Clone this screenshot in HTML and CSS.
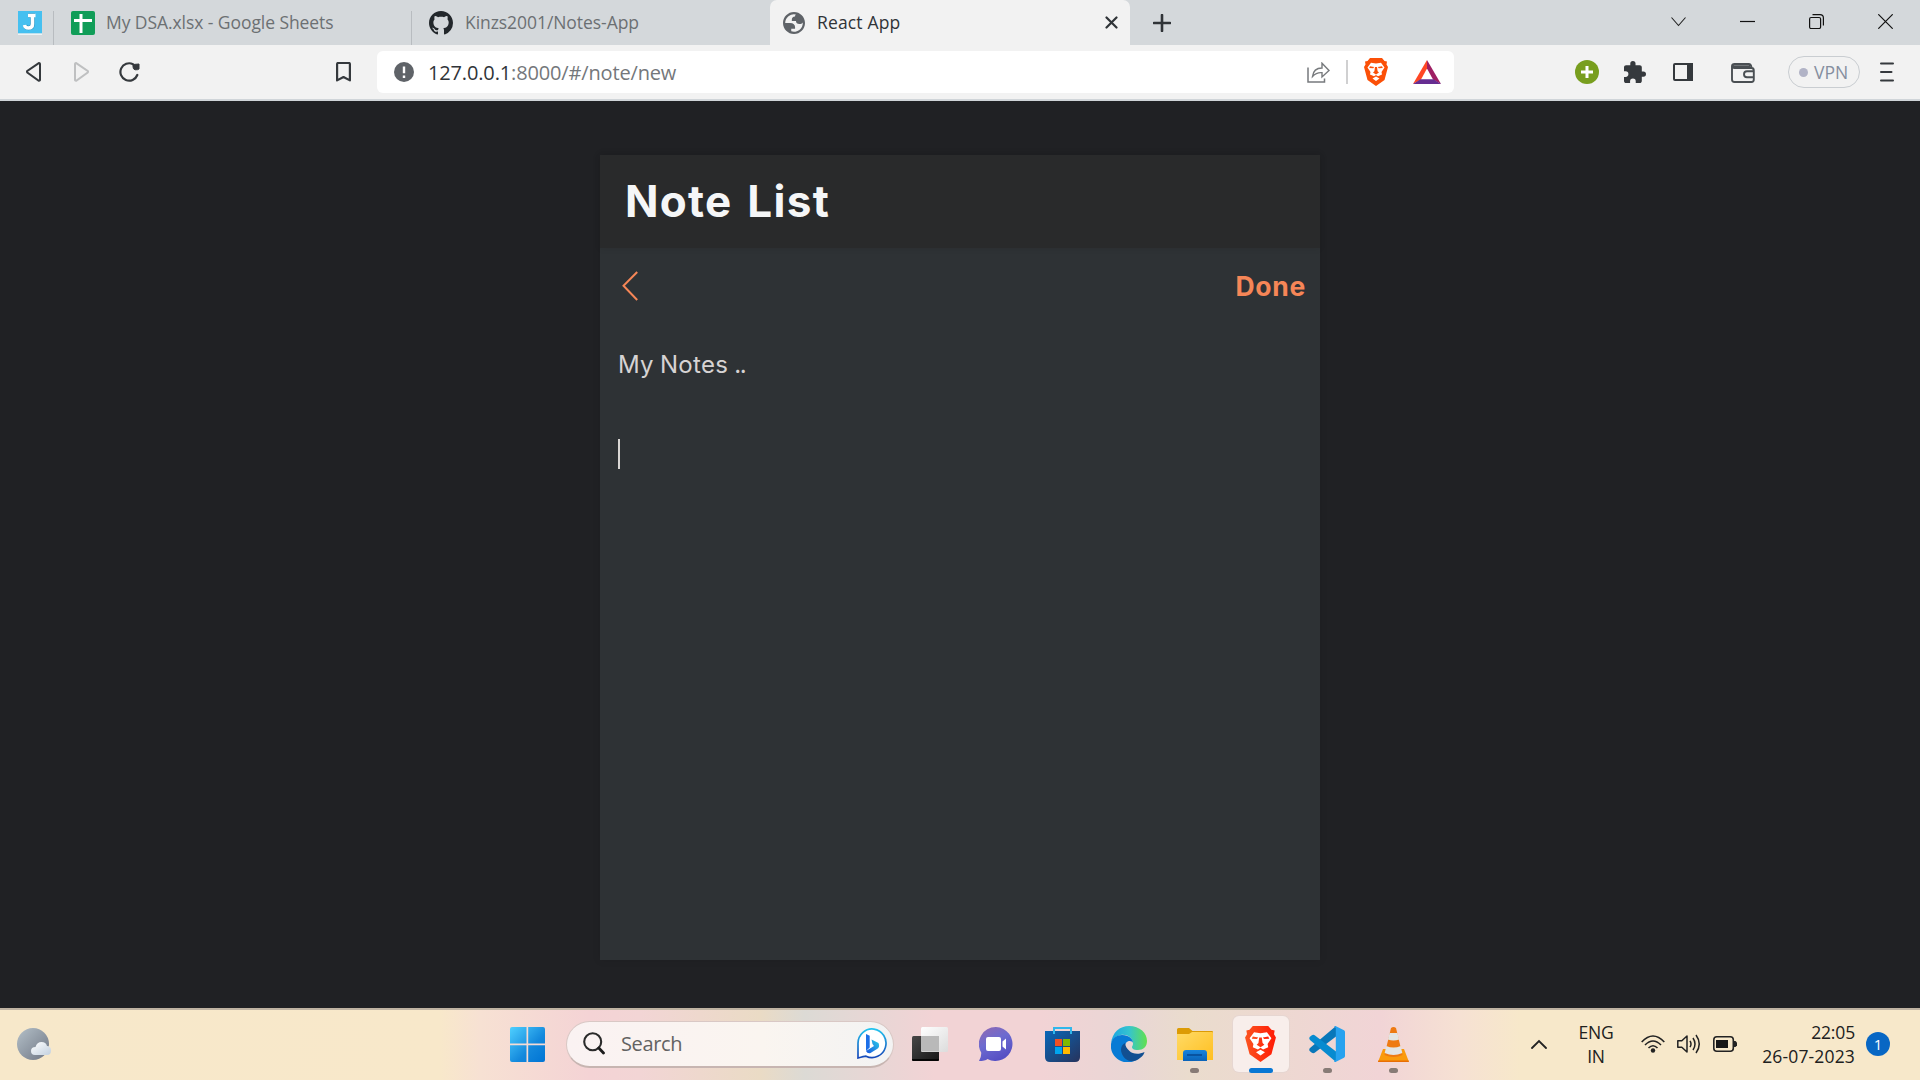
FILE: index.html
```html
<!DOCTYPE html>
<html lang="en">
<head>
<meta charset="utf-8">
<title>React App</title>
<link rel="stylesheet" href="styles.css">
</head>
<body>
<header class="tabs">
  <div class="tab tab-pinned">
    <svg width="24" height="24" viewBox="0 0 24 24"><rect width="24" height="22.500" fill="#46c0f0"/><rect y="22.500" width="24" height="1.500" fill="#eef3f5"/><path d="M10 4.500h7M14.500 4.500v8.500q0 4-4 4-3 0-3.500-3" fill="none" stroke="#2b91bd" stroke-width="4.500"/><path d="M10 4.500h7.500M14.500 4.500v8.500q0 4-4 4-3.500 0-4-3" fill="none" stroke="#fff" stroke-width="3.500"/></svg>
  </div>
  <div class="tab tab-sheets">
    <svg width="24" height="24" viewBox="0 0 24 24"><rect width="24" height="24" rx="2" fill="#109d58"/><path d="M10 3v19M3 9.500h18" stroke="#fff" stroke-width="3"/></svg>
    <span class="tab-title title-sheets">My DSA.xlsx - Google Sheets</span>
  </div>
  <div class="tab tab-github">
    <svg width="24" height="24" viewBox="0 0 16 16"><path fill="#22272b" d="M8 0C3.580 0 0 3.580 0 8c0 3.540 2.290 6.530 5.470 7.590.4.070.55-.17.55-.38 0-.19-.01-.82-.01-1.490-2.010.37-2.530-.49-2.690-.94-.09-.23-.48-.94-.82-1.130-.28-.15-.68-.52-.01-.53.63-.01 1.080.58 1.230.82.720 1.210 1.870.87 2.330.66.070-.52.280-.87.510-1.070-1.780-.2-3.640-.89-3.640-3.950 0-.87.310-1.590.82-2.150-.08-.2-.36-1.020.08-2.120 0 0 .67-.21 2.200.82.640-.18 1.320-.27 2-.27s1.360.09 2 .27c1.530-1.040 2.200-.82 2.200-.82.440 1.100.160 1.920.080 2.120.510.560.820 1.270.820 2.150 0 3.070-1.870 3.750-3.650 3.950.290.250.540.730.540 1.480 0 1.070-.01 1.930-.01 2.200 0 .21.150.46.550.38A8.010 8.010 0 0016 8c0-4.420-3.580-8-8-8z"/></svg>
    <span class="tab-title title-github">Kinzs2001/Notes-App</span>
  </div>
  <div class="tab tab-active">
    <svg width="22" height="22" viewBox="2 2 20 20"><path fill="#5f6368" fill-rule="evenodd" d="M12 2C6.480 2 2 6.480 2 12s4.480 10 10 10 10-4.480 10-10S17.520 2 12 2zM4 12h4.400c3.407.022 4.922 1.730 4.543 5.127H9.488v2.470a8.004 8.004 0 0 0 10.498-8.083C19.327 12.504 18.332 13 17 13c-2.137 0-3.206-.916-3.206-2.750h-3.748c-.274-2.728.683-4.092 2.870-4.092 0-.975.327-1.597.811-1.970A8.004 8.004 0 0 0 4 12z"/></svg>
    <span class="tab-title title-active">React App</span>
    <svg class="tab-close" width="13" height="13" viewBox="0 0 13 13"><path d="M1.500 1.500l10 10M11.500 1.500l-10 10" stroke="#303438" stroke-width="2.200" stroke-linecap="round"/></svg>
  </div>
  <svg class="new-tab" width="18" height="18" viewBox="0 0 18 18"><path d="M9 1v16M1 9h16" stroke="#303438" stroke-width="2.600" stroke-linecap="round"/></svg>
  <div class="window-buttons">
    <svg width="15" height="15" viewBox="0 0 15 15"><path d="M.5 3.500l7 8 7-8" fill="none" stroke="#222" stroke-width="1.100"/></svg>
    <svg width="15" height="15" viewBox="0 0 15 15"><path d="M0 7.500h15" stroke="#111" stroke-width="1.200"/></svg>
    <svg width="15" height="15" viewBox="0 0 15 15"><rect x=".6" y="3.500" width="11" height="11" rx="1.500" fill="none" stroke="#111" stroke-width="1.200"/><path d="M3.500.6h7.500q3.400 0 3.400 3.400v7.500" fill="none" stroke="#111" stroke-width="1.200"/></svg>
    <svg width="15" height="15" viewBox="0 0 15 15"><path d="M.3.300l14.400 14.400M14.700.300L.3 14.700" stroke="#111" stroke-width="1.200"/></svg>
  </div>
</header>

<nav class="toolbar">
  <svg class="nav-back" width="15" height="20" viewBox="0 0 15 20"><path d="M12.800 1.100L1.300 8.900q-.6.900 0 1.600l11.500 8.200q1.200.2 1.200-1V2.200q0-1.300-1.200-1.100z" fill="none" stroke="#35393d" stroke-width="2"/></svg>
  <svg class="nav-forward" width="15" height="20" viewBox="0 0 15 20"><path d="M2.200 1.100l11.500 7.800q.6.900 0 1.600L2.200 18.700q-1.200.2-1.200-1V2.200q0-1.300 1.200-1.100z" fill="none" stroke="#bfc0c1" stroke-width="2"/></svg>
  <svg class="nav-reload" width="21" height="20" viewBox="0 0 21 20"><path d="M14 2.200A8.700 8.700 0 1 0 18.300 13" fill="none" stroke="#35393d" stroke-width="2.200" stroke-linecap="round"/><path d="M14 2.500l6-.5v5q-1 1-4 .8-2-.6-2-3z" fill="#35393d" stroke="#35393d"/></svg>
  <svg class="nav-bookmark" width="15" height="20" viewBox="0 0 15 20"><path d="M1.100 2q0-1 1-1h10.800q1 0 1 1v16.400L7.500 15l-6.400 3.400z" fill="none" stroke="#35393d" stroke-width="2.200" stroke-linejoin="round"/></svg>
  <div class="address">
    <svg width="20" height="20" viewBox="0 0 20 20"><circle cx="10" cy="10" r="10" fill="#5f6368"/><path d="M10 4.500v6.800M10 13.500v2.600" stroke="#fff" stroke-width="2.400"/></svg>
    <span class="url"><b>127.0.0.1</b>:8000/#/note/new</span>
    <svg class="share" width="23" height="21" viewBox="0 0 23 21"><path d="M1 5.500V20h16.500v-3.500" fill="none" stroke="#777a7d" stroke-width="1.500"/><path d="M5.500 14.500q1-8.500 9.500-8.500V1.200l7 7.300-7 6.500v-4.300q-5.500-.5-9.500 3.800z" fill="none" stroke="#777a7d" stroke-width="1.400"/></svg>
    <span class="address-rule"></span>
    <svg class="shield" width="24" height="28" viewBox="0 0 24 28"><use href="#lion" fill="#fb5008"/></svg>
    <svg class="rewards" width="28" height="24" viewBox="0 0 28 24"><path d="M14 0L0 24l8-4.500 6-11z" fill="#ff4724"/><path d="M14 0l14 24-8-4.500-6-11z" fill="#9e1f63"/><path d="M0 24h28l-7.500-4.800H7.500z" fill="#662d91"/></svg>
  </div>
  <svg class="extension" width="24" height="24" viewBox="0 0 24 24"><circle cx="12" cy="12" r="12" fill="#789e1e"/><path d="M12 6v12M6 12h12" stroke="#fff" stroke-width="3"/></svg>
  <svg class="puzzle" width="22" height="22" viewBox="2 1 21 21"><path fill="#35393d" d="M20.500 11H19V7c0-1.100-.9-2-2-2h-4V3.500a2.500 2.500 0 0 0-5 0V5H4c-1.100 0-2 .9-2 2v3.800h1.500a2.700 2.700 0 0 1 0 5.400H2V20c0 1.100.9 2 2 2h3.800v-1.500a2.700 2.700 0 0 1 5.400 0V22H17c1.100 0 2-.9 2-2v-4h1.500a2.500 2.500 0 0 0 0-5z"/></svg>
  <svg class="side-panel" width="20" height="18" viewBox="0 0 20 18"><rect x="1" y="1" width="18" height="16" rx="1" fill="none" stroke="#35393d" stroke-width="2"/><path d="M14 0h6v18h-6z" fill="#35393d"/></svg>
  <svg class="wallet" width="24" height="20" viewBox="0 0 24 20"><path d="M1 3v13.500Q1 19 3.500 19h17q2.300 0 2.300-2.500V7.500Q22.800 5 20.500 5H3.500Q1 5 1 3q0-2 2.500-2h14.200q2.300 0 2.800 3.500M2 3.100h17M23 8.300h-7q-3 0-3 3t3 3h7" fill="none" stroke="#4a4f53" stroke-width="1.900"/></svg>
  <div class="vpn"><i></i><span>VPN</span></div>
  <svg class="menu" width="14" height="20" viewBox="0 0 14 20"><path d="M1 1.500h12M1 10h10.500M1 18.500h12" stroke="#35393d" stroke-width="2" stroke-linecap="round"/></svg>
</nav>

<main class="page">
  <section class="card">
    <div class="card-header"><h1>Note List</h1></div>
    <div class="note">
      <div class="note-actions">
        <svg width="16" height="30" viewBox="0 0 16 30"><path d="M15.200 1L1.500 14.800 15.200 29" fill="none" stroke="#f68657" stroke-width="2"/></svg>
        <span class="done">Done</span>
      </div>
      <div class="note-text">My Notes <span class="dots">..</span></div>
      <div class="caret"></div>
    </div>
  </section>
</main>

<footer class="taskbar">
  <svg class="weather" width="34" height="33" viewBox="0 0 34 33"><circle cx="16" cy="16" r="16" fill="url(#moon)"/><path d="M18 27q-4 0-4-4t4.500-4q1.500-5 6-5t5.500 4q4 0 4 4.500t-4 4.500z" fill="url(#cloud)"/></svg>
  <svg class="start" width="35" height="35" viewBox="0 0 35 35"><path fill="url(#win)" d="M2 0h14.500v16.500H0V2q0-2 2-2zM18.200 0H33q2 0 2 2v14.500H18.200zM0 18.200h16.500V35H2q-2 0-2-2zM18.200 18.200H35V33q0 2-2 2H18.200z"/></svg>
  <div class="search">
    <svg width="22" height="23" viewBox="0 0 22 23"><circle cx="9.700" cy="9.700" r="8.500" fill="none" stroke="#2a2a2a" stroke-width="2.100"/><path d="M15.800 16l4.700 5" stroke="#1c1c1c" stroke-width="2.800" stroke-linecap="round"/></svg>
    <span>Search</span>
    <svg class="bing" width="30" height="31" viewBox="0 0 30 31"><path d="M1 30V15.500a14 14.300 0 1 1 8 12.700Q7 28.500 1 30z" fill="#fff" stroke="url(#bing)" stroke-width="1.700"/><path d="M9 6l3.700 1.700v11.800L9 23z" fill="#1b6fe8"/><path d="M14.500 11.500l7 3.500q1.800 4-1.500 6l-6.500 4q-3 .8-4.500-2l8-5-1.500-2z" fill="url(#bing2)"/></svg>
  </div>
  <div class="apps">
    <div class="app"><svg width="36" height="34" viewBox="0 0 36 34"><rect y="9" width="27" height="25" rx="1.500" fill="url(#dark)"/><path d="M0 32h27v.500q0 1.500-1.500 1.500h-24Q0 34 0 32.500z" fill="#050505"/><rect x="9" width="27" height="25" rx="1.500" fill="url(#pale)"/><path d="M9 9h18v15.500H10.500Q9 24.500 9 23z" fill="#b9b9b9"/></svg></div>
    <div class="app"><svg width="34" height="34" viewBox="0 0 34 34"><path d="M17 0a17 17 0 1 1-8.500 32Q6 34 0 34q2.500-4 2.200-8.500A17 17 0 0 1 17 0z" fill="url(#chat)"/><rect x="7" y="10" width="15" height="14" rx="2" fill="#fff"/><path d="M23.500 14.500l3.500-3v11l-3.500-3z" fill="#fff"/></svg></div>
    <div class="app"><svg width="35" height="35" viewBox="0 0 35 35"><path d="M0 4h35v26q0 5-5 5H5q-5 0-5-5z" fill="url(#store)"/><path d="M9 7V1h17v6" fill="none" stroke="#30b7eb" stroke-width="2"/><path d="M10 12h7v7h-7z" fill="#f25022"/><path d="M18 12h7v7h-7z" fill="#7fba00"/><path d="M10 20h7v7h-7z" fill="#00a4ef"/><path d="M18 20h7v7h-7z" fill="#ffb900"/></svg></div>
    <div class="app"><svg width="36" height="36" viewBox="0 0 36 36"><path d="M0 18C1 6 9 0 18 0c11 0 18 7 18 15 0 6-4 9-9 9-5 0-6-1.500-6-3 0-1 1-1 1-3.500C22 11 15 8 10 9 4 10 1 14 0 18z" fill="url(#edge1)"/><path d="M0 18c1-6 6-9 11-9 7 0 11 4 11 8-1-3-8-3-8 4 0 8 8 15 16 9-7 8-16 7-20 5C3 32-1 25 0 18z" fill="#087bd5"/><path d="M14 17c-4 2-5 7-3 11 3 7 11 10 18 4 3-2 4-4 4.500-6-6 3-12 2-15-1-3-2.500-4-5-4.500-8z" fill="#124f91"/></svg></div>
    <div class="app running"><svg width="36" height="33" viewBox="0 0 36 33"><path d="M0 1.500Q0 0 1.500 0H12l3.500 3H35q1 0 1 1v8H0z" fill="#dc9b05"/><path d="M0 6h12l3-2h20q1 0 1 1v27H0z" fill="url(#folder)"/><path d="M6 33v-8q0-3 3-3h18q3 0 3 3v8z" fill="url(#tray)"/><path d="M10 27h15" stroke="#08509b" stroke-width="1.800"/></svg></div>
    <div class="app running current"><svg width="31" height="36" viewBox="0 0 24 28"><use href="#lion" fill="url(#brave)"/></svg></div>
    <div class="app running"><svg width="36" height="36" viewBox="0 0 36 36"><path d="M27 0v10.500L6 26.500Q4.500 28 2.500 26.500L.7 25q-1-1.500.3-3z" fill="#0877b9"/><path d="M27 36V25.500L6 9.500Q4.500 8 2.500 9.500L.7 11q-1 1.500.3 3z" fill="#078bd0"/><path d="M25 .5q1-.8 2-.3l8 4q1 .7 1 1.800v24q0 1.200-1 1.800l-8 4q-1 .5-2-.4l1.800-1.600V2z" fill="#27a2ef"/></svg></div>
    <div class="app running"><svg width="31" height="35" viewBox="0 0 31 35"><path d="M5 22h21l5 13H0z" fill="#fa9b0c"/><path d="M.3 33.500h30.400V35H0z" fill="#e86e05"/><path d="M13 1q2.500-2 5 0l6.500 27q-9 4-18 0z" fill="#ee7a12"/><path d="M11.600 6h7.800l1.700 6.500q-5.600 2-11.200 0zM8.300 19q7.200 3 14.400 0l1.600 7q-8.800 4-17.600 0z" fill="#e3e5e4"/></svg></div>
  </div>
  <div class="status">
    <svg class="up" width="16" height="10" viewBox="0 0 16 10"><path d="M1 9l7-7 7 7" fill="none" stroke="#222" stroke-width="1.800" stroke-linecap="round"/></svg>
    <div class="lang">ENG<br>IN</div>
    <svg class="wifi" width="24" height="18" viewBox="0 0 24 18"><path d="M.7 7Q12-5 23.300 7M4 10q8-8 16 0M7.500 13q4.500-4.500 9 0" fill="none" stroke="#222" stroke-width="1.600"/><circle cx="12" cy="15.500" r="2.200" fill="#222"/></svg>
    <svg class="sound" width="24" height="20" viewBox="0 0 24 20"><path d="M.8 6.800h4L10 2v16l-5.200-4.800h-4zM13 6.800q2 3.200 0 6.400M16 4q4 6 0 12M19 1q6.500 9 0 18" fill="none" stroke="#222" stroke-width="1.500" stroke-linejoin="round"/></svg>
    <svg class="battery" width="24" height="16" viewBox="0 0 24 16"><rect x=".8" y=".8" width="19.500" height="14.400" rx="3" fill="none" stroke="#222" stroke-width="1.600"/><rect x="3" y="4" width="12" height="8" fill="#171717"/><path d="M21 5h1.500L24 6.500v3L22.500 11H21z" fill="#222"/></svg>
    <div class="clock"><span class="time">22:05</span><span class="date">26-07-2023</span></div>
    <div class="badge">1</div>
  </div>
</footer>

<svg class="defs" width="0" height="0">
  <defs>
    <g id="lion"><path d="M6 0h12l2.500 3L23 3.500 22.500 6.500 24 9l-3.500 13-8.500 6-8.500-6L0 9l1.500-2.500L1 3.500 3.500 3z"/><path fill="#fff" d="M7 4.800l5 .8 5-.8 3.500 4.700-3 4.500.5 2.500-4 1.800L12 17l-2 1.300-4-1.800.5-2.500-3-4.500zM8.500 20.500L12 18.500l3.500 2L12 23z"/><path d="M6 8.200l4.200.8-1 1.200-4-.2zM18 8.200l-4.200.8 1 1.200 4-.2zM11 9h2l.6 4.200L15 14.500l-3 2-3-2 1.400-1.300z"/></g>
    <linearGradient id="brave"><stop stop-color="#fb5420"/><stop offset="1" stop-color="#ff1a05"/></linearGradient>
    <linearGradient id="moon" x2="1" y2="1"><stop stop-color="#b4c0c8"/><stop offset="1" stop-color="#6f7684"/></linearGradient>
    <linearGradient id="cloud" x2="1" y2="1"><stop stop-color="#fff"/><stop offset="1" stop-color="#c2d0df"/></linearGradient>
    <linearGradient id="win" x2="1" y2="1"><stop stop-color="#4fd0ff"/><stop offset=".6" stop-color="#1388dc"/><stop offset="1" stop-color="#0074d4"/></linearGradient>
    <linearGradient id="bing" x2="0" y2="1"><stop stop-color="#22c3ee"/><stop offset="1" stop-color="#1646b8"/></linearGradient>
    <linearGradient id="bing2" x1="1" x2="0" y2="1"><stop stop-color="#2bd0e8"/><stop offset="1" stop-color="#1955e0"/></linearGradient>
    <linearGradient id="dark" x2="1" y2="1"><stop stop-color="#474747"/><stop offset="1" stop-color="#161616"/></linearGradient>
    <linearGradient id="pale" x2="1" y2="1"><stop stop-color="#fff"/><stop offset="1" stop-color="#dcdcdc"/></linearGradient>
    <linearGradient id="chat" x2=".5" y2="1"><stop stop-color="#9268b0"/><stop offset=".5" stop-color="#6d6bd0"/><stop offset="1" stop-color="#5650c4"/></linearGradient>
    <linearGradient id="store" x2="1" y2="1"><stop stop-color="#0867b8"/><stop offset="1" stop-color="#27335c"/></linearGradient>
    <linearGradient id="edge1"><stop stop-color="#1ba5e3"/><stop offset=".5" stop-color="#35c4cf"/><stop offset="1" stop-color="#62e04e"/></linearGradient>
    <linearGradient id="folder" x2="1" y2="1"><stop stop-color="#ffda66"/><stop offset="1" stop-color="#ffbf20"/></linearGradient>
    <linearGradient id="tray" x2="0" y2="1"><stop stop-color="#1784dc"/><stop offset="1" stop-color="#0a63b8"/></linearGradient>
  </defs>
</svg>
</body>
</html>
```
FILE: styles.css
```css
* { box-sizing: border-box; }
body {
  margin: 0;
  height: 1080px;
  display: flex;
  flex-direction: column;
  overflow: hidden;
  background: #202124;
  font-family: "Open Sans", "Noto Sans", sans-serif;
}
svg { display: block; flex: none; }
.defs { position: absolute; }

.tabs { display: flex; height: 45px; flex: none; background: #d4d8db; }
.tab { display: flex; align-items: center; height: 45px; white-space: nowrap; }
.tab-pinned, .tab-sheets {
  background: linear-gradient(#b8bcc0, #b8bcc0) right bottom / 1px 34px no-repeat;
}
.tab-pinned { width: 54px; padding-left: 18px; }
.tab-sheets { width: 358px; padding-left: 17px; }
.tab-github { width: 358px; padding-left: 17px; }
.tab-active {
  width: 360px;
  padding: 0 12px 0 13px;
  border-radius: 7px 7px 0 0;
  background: #f2f2f2;
}
.tab-title { padding-bottom: 2px; font-size: 17.500px; line-height: 22px; color: #6c7073; }
.title-sheets { margin-left: 11px; letter-spacing: -0.070px; }
.title-github { margin-left: 12px; letter-spacing: -0.060px; }
.title-active { margin-left: 12px; color: #303438; letter-spacing: 0.150px; }
.tab-close { margin-left: auto; }
.new-tab { margin: 14px 0 0 23px; }
.window-buttons { display: flex; gap: 54px; margin: 14px 27px 0 auto; }

.toolbar {
  display: flex;
  align-items: center;
  height: 56px;
  flex: none;
  background: #f2f2f2;
  border-bottom: 2px solid #d0d5d9;
}
.nav-back { margin-left: 26px; }
.nav-forward { margin-left: 33px; }
.nav-reload { margin-left: 30px; }
.nav-bookmark { margin-left: 196px; }
.address {
  display: flex;
  align-items: center;
  width: 1077px;
  height: 42px;
  margin-left: 26px;
  padding: 0 13px 0 17px;
  border-radius: 6px;
  background: #fff;
}
.url { margin-left: 14px; font-size: 20px; color: #74777b; letter-spacing: -0.150px; }
.url b { font-weight: 400; color: #303438; }
.share { margin-left: auto; }
.address-rule { width: 2px; height: 24px; margin-left: 16px; background: #d0d0d1; }
.shield { margin-left: 16px; }
.rewards { margin-left: 25px; }
.extension { margin-left: 121px; }
.puzzle { margin-left: 25px; }
.side-panel { margin-left: 27px; }
.wallet { margin: 2px 0 0 38px; }
.vpn {
  display: flex;
  align-items: center;
  width: 72px;
  height: 32px;
  margin-left: 33px;
  padding-left: 10px;
  border: 1px solid #c9cdd1;
  border-radius: 16px;
  font-size: 17.500px;
  color: #858e9f;
}
.vpn i { width: 9px; height: 9px; margin-right: 6px; border-radius: 50%; background: #b1b3c6; }
.vpn span { letter-spacing: 0; }
.menu { margin-left: 20px; }

.page {
  display: flex;
  justify-content: center;
  height: 907px;
  padding-top: 54px;
  flex: none;
  background: #202124;
}
.card {
  display: flex;
  flex-direction: column;
  width: 720px;
  height: 805px;
  background: #2e3235;
  box-shadow: 0 0 8px rgba(0, 0, 0, 0.100);
  font-family: Inter, "Open Sans", sans-serif;
}
.card-header {
  display: flex;
  align-items: center;
  height: 93px;
  padding: 0 0 2px 25px;
  background: #292a2b;
  box-shadow: 0 1px 6px rgba(0, 0, 0, 0.080);
}
h1 {
  margin: 0;
  font-size: 44px;
  font-weight: 700;
  color: #f5f6f7;
  letter-spacing: 1.300px;
  word-spacing: 3px;
}
.note { padding: 0 14px 0 18px; }
.note-actions {
  display: flex;
  align-items: center;
  justify-content: space-between;
  height: 76px;
  padding-left: 4px;
}
.done { font-size: 26.500px; font-weight: 700; color: #f68657; letter-spacing: 0.700px; }
.note-text {
  height: 115px;
  padding-top: 23px;
  font-size: 24px;
  line-height: 36px;
  color: #d6d3d3;
  letter-spacing: 0.300px;
  word-spacing: -1px;
}
.dots { letter-spacing: -1.500px; }
.caret { width: 2px; height: 30px; background: #d9d6d4; }

.taskbar {
  display: flex;
  align-items: center;
  height: 72px;
  padding-bottom: 2px;
  flex: none;
  border-top: 2px solid #bfb3a2;
  background: linear-gradient(90deg, #f7e8ca 0, #f8e8ca 440px, #f7e1d3 480px, #f4d3d5 590px, #f2d5d5 640px, #eadbc5 760px, #dcdad5 805px, #f2d3d5 935px, #f2d3d5 1040px, #e9d6d5 1130px, #eadccd 1190px, #f1d4d6 1380px, #f6e1d3 1460px, #f7e8ca 1520px);
}
.weather { margin-left: 17px; }
.start { margin-left: 459px; }
.search {
  display: flex;
  align-items: center;
  width: 328px;
  height: 47px;
  margin-left: 21px;
  padding: 0 6px 0 16px;
  border: 1px solid #d9c8c5;
  border-bottom: 2px solid #c7b5b1;
  border-radius: 24px;
  background: linear-gradient(90deg, #faf2f2, #faf5f0 60%, #f3f3f3);
}
.search span { margin-left: 16px; font-size: 20px; color: #626262; letter-spacing: -0.350px; }
.bing { margin-left: auto; }
.apps { display: flex; margin-left: 8px; gap: 10.200px; }
.app {
  display: flex;
  position: relative;
  align-items: center;
  justify-content: center;
  width: 56px;
  height: 56px;
  border-radius: 6px;
}
.current { background: #f8eeeb; box-shadow: 0 0 0 1px #e6d6d1; }
.running::after {
  content: "";
  position: absolute;
  bottom: -1px;
  left: 23.500px;
  width: 9px;
  height: 5px;
  border-radius: 3px;
  background: #877b76;
}
.current::after { left: 16px; width: 24px; background: #0877d4; }
.status {
  display: flex;
  align-items: center;
  margin: 0 30px 0 auto;
  font-size: 17.500px;
  line-height: 24px;
  color: #202020;
}
.lang { width: 36px; margin-left: 31px; text-align: center; letter-spacing: -0.200px; }
.wifi { margin-left: 27px; }
.sound { margin-left: 12px; }
.battery { margin-left: 12px; }
.clock {
  display: flex;
  flex-direction: column;
  align-items: flex-end;
  width: 118px;
  padding-bottom: 1px;
}
.time { letter-spacing: -0.150px; }
.date { letter-spacing: 0.150px; }
.badge {
  width: 24px;
  height: 24px;
  margin-left: 11px;
  border-radius: 50%;
  background: #0867c4;
  color: #fff;
  font-size: 15px;
  text-align: center;
}
```
